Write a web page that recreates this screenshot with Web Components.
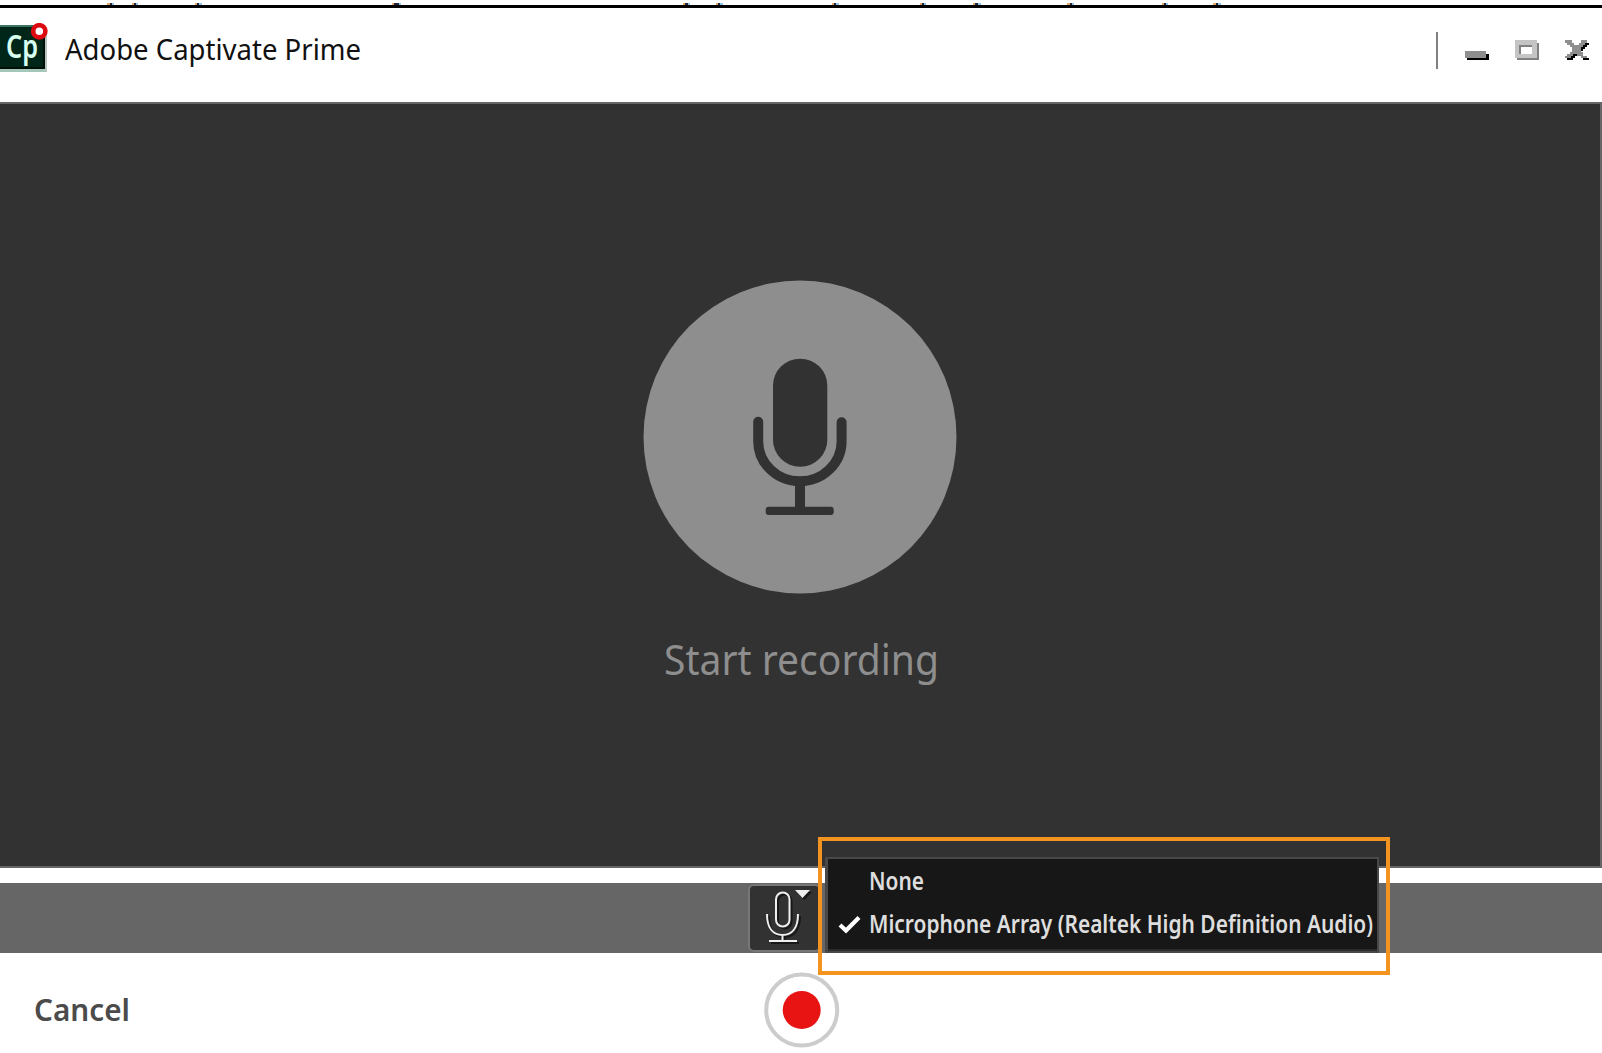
<!DOCTYPE html>
<html lang="en">
<head>
<meta charset="utf-8">
<title>Adobe Captivate Prime</title>
<style>
html,body{margin:0;height:100%;overflow:hidden;background:#fff}
body{font-family:"Noto Sans","Open Sans",sans-serif}
</style>
</head>
<body>
<recorder-window></recorder-window>
<script>
const define = (name, html, setup) => {
  const template = document.createElement('template');
  template.innerHTML = html;
  customElements.define(name, class extends HTMLElement {
    constructor() {
      super();
      this.attachShadow({mode: 'open'}).append(template.content.cloneNode(true));
    }
    connectedCallback() { if (setup) setup(this); }
  });
};

/* Label whose glyphs are squeezed horizontally to a given width */
define('fit-label', `
<style>
:host{display:block;flex:none;white-space:nowrap}
span{display:inline-block;transform-origin:0 50%;line-height:inherit}
</style><span><slot></slot></span>`, el => {
  const span = el.shadowRoot.querySelector('span');
  const target = Number(el.getAttribute('width'));
  el.style.width = target + 'px';
  const natural = span.getBoundingClientRect().width;
  if (natural) span.style.transform = 'scaleX(' + target / natural + ')';
});

define('backdrop-edge', `
<style>:host{display:block;height:5px;border-bottom:3px solid #000}svg{display:block}</style>
<svg width="1602" height="5" viewBox="0 0 1602 5" shape-rendering="crispEdges">
<g fill="#e3a868"><path d="M107 3h3v2h-3zM132 3h2v2h-2zM195 3h2v2h-2zM392 3h2v2h-2zM683 3h2v2h-2zM716 3h2v2h-2zM832 3h2v2h-2zM920 3h2v2h-2zM973 3h2v2h-2zM1067 3h3v2h-3zM1162 3h2v2h-2zM1213 3h3v2h-3z"/></g>
<g fill="#23283c"><path d="M110 3h2v2h-2zM134 3h2v2h-2zM197 3h2v2h-2zM394 3h5v2h-5zM685 3h3v2h-3zM718 3h2v2h-2zM834 3h2v2h-2zM922 3h2v2h-2zM975 3h3v2h-3zM1070 3h2v2h-2zM1164 3h2v2h-2zM1216 3h2v2h-2z"/></g>
<g fill="#8fc6ee"><path d="M112 3h2v2h-2zM136 3h2v2h-2zM199 3h3v2h-3zM399 3h2v2h-2zM688 3h2v2h-2zM720 3h3v2h-3zM836 3h3v2h-3zM924 3h2v2h-2zM978 3h3v2h-3zM1072 3h2v2h-2zM1166 3h2v2h-2zM1218 3h3v2h-3z"/></g>
</svg>`);

define('app-logo', `
<style>
:host{display:block;position:relative;width:48px;height:50px;margin-top:15px}
.tile{box-sizing:border-box;width:45px;height:44px;background:#00261a;border:2px solid #001009;border-top-color:#3f7361;border-left:0;box-shadow:0 3px #a5c7ba,2px 3px #b6c4be}
.gap{height:2px}
fit-label{font-size:32px;line-height:38px;color:#d9fff1;font-weight:600;padding-left:6px}
svg{position:absolute;left:31px;top:0}
</style>
<div class="gap"></div>
<div class="tile"><fit-label width="32">Cp</fit-label></div>
<svg width="17" height="17" viewBox="0 0 17 17"><circle cx="8.3" cy="8.3" r="6.1" fill="#fff" stroke="#dc0a10" stroke-width="4.6"/></svg>`);

define('window-controls', `
<style>:host{display:block}svg{display:block}</style>
<svg width="166" height="94" viewBox="1436 8 166 94" shape-rendering="crispEdges">
<path fill="#808080" d="M1436 32h2v37h-2z"/>
<path fill="#000" d="M1467 54h22v6h-22z"/><path fill="#8e8e8e" d="M1465 51h21v7h-21z"/>
<path fill="#808080" d="M1517 43h22v17h-22z"/><path fill="#c4c4c4" d="M1515 40h22v18h-22z"/>
<path fill="#808080" d="M1519 45h13v9h-13z"/><path fill="#fff" d="M1521 47h11v7h-11z"/>
<path fill="#000" d="M1585 43h4v2h-4zM1583 45h4v2h-4zM1581 47h4v2h-4zM1581 49h2v2h-2zM1573 54h4v2h-4zM1571 56h4v2h-4zM1567 58h6v2h-6zM1583 58h6v2h-6z"/>
<path fill="#8e8e8e" d="M1565 40h7v3h-7zM1581 40h6v3h-6zM1567 43h7v2h-7zM1579 43h6v2h-6zM1570 45h13v2h-13zM1572 47h9v5h-9zM1570 52h13v2h-13zM1567 54h6v2h-6zM1577 54h6v2h-6zM1565 56h6v2h-6zM1581 56h6v2h-6z"/>
</svg>`);

define('title-bar', `
<style>
:host{display:flex;height:94px;background:#fff;color:#111}
.name{font-size:29.5px;line-height:40px;padding:21px 0 0 16.5px;flex:1}
</style>
<app-logo></app-logo><div class="name"><fit-label width="296">Adobe Captivate Prime</fit-label></div><window-controls></window-controls>`);

define('record-stage', `
<style>
:host{box-sizing:border-box;display:flex;flex-direction:column;align-items:center;height:766px;background:#323232;border:solid #666;border-width:2px 2px 2px 0;padding-top:176px}
svg{display:block}
fit-label{font-size:41px;line-height:56px;color:#8e8e8e;font-weight:400;margin:37px 0 0 2px}
</style>
<svg width="314" height="314" viewBox="643.3 280.3 314 314">
<circle cx="800.3" cy="437.3" r="156.5" fill="#8e8e8e"/>
<rect x="773.3" y="359" width="54.3" height="108" rx="27" fill="#323232"/>
<g fill="none" stroke="#323232" stroke-linecap="round"><path stroke-width="10" d="M758.5 422v19.500a41.7 40 0 0 0 83.400 0V422.500"/><path stroke-width="10" stroke-linecap="butt" d="M800.3 484v25"/></g>
<rect x="766" y="507" width="68" height="8.300" rx="3" fill="#323232"/>
</svg>
<fit-label width="275">Start recording</fit-label>`);

define('mic-picker', `
<style>
:host{display:block;box-sizing:border-box;width:73px;height:68px;background:#323232;border:2px solid #777;border-radius:6px;margin:1px 0 0 748px}
svg{display:block}
</style>
<svg width="69" height="64" viewBox="750 886 69 64">
<g fill="none" stroke="#171717" stroke-width="2" transform="translate(2 2)"><rect x="776" y="892.5" width="13.500" height="34" rx="6.7"/><path d="M767 914c0 14 6 21 15.500 21s15.500-7 15.500-21M782.500 935v6M769 941h28"/><path fill="#171717" stroke="none" d="M795 890h15l-7.500 8z"/></g>
<g fill="none" stroke="#eee" stroke-width="2"><rect x="776" y="892.5" width="13.500" height="34" rx="6.7"/><path d="M767 914c0 14 6 21 15.500 21s15.500-7 15.500-21M782.500 935v6M769 941h28"/><path fill="#eee" stroke="none" d="M795 890h15l-7.500 8z"/></g>
</svg>`);

define('device-option', `
<style>
:host{display:flex;align-items:center;height:43px;font-size:24.5px;line-height:43px;font-weight:600;color:#dedede}
.mark{width:41px;height:24px;flex:none}
svg{display:none;width:24px;height:20px;margin:3px 0 0 10px}
:host([checked]) svg{display:block}
</style>
<div class="mark"><svg viewBox="0 0 24 20"><path d="M2 10l6 5.500L21 2.500" fill="none" stroke="#fff" stroke-width="4.200"/></svg></div><slot></slot>`);

define('device-menu', `
<style>
:host{display:block;box-sizing:border-box;position:absolute;left:818px;top:837px;width:572px;height:138px;border:4px solid #f39421;padding:16px 0 0 3px}
.list{box-sizing:border-box;width:554px;height:96px;background:#171717;border:2px solid #484848;border-left-width:3px;box-shadow:inset 0 -2px #2c2c2c}
</style>
<div class="list">
<device-option><fit-label width="55">None</fit-label></device-option>
<device-option checked><fit-label width="504">Microphone Array (Realtek High Definition Audio)</fit-label></device-option>
</div>`);

define('source-bar', `
<style>:host{display:flex;height:70px;margin-top:15px;background:#666}</style>
<mic-picker></mic-picker><device-menu></device-menu>`);

define('action-footer', `
<style>
:host{display:flex;height:100px;background:#fff;color:#4b4b4b}
.cancel{font-size:30px;line-height:40px;font-weight:600;padding:37px 0 0 33.5px;width:730.5px}
svg{display:block;margin-top:19px}
</style>
<div class="cancel"><fit-label width="96">Cancel</fit-label></div>
<svg width="76" height="76" viewBox="0 0 76 76"><circle cx="37.700" cy="38" r="35.500" fill="#fff" stroke="#ccc" stroke-width="4"/><circle cx="37.700" cy="38" r="19" fill="#e81313"/></svg>`);

define('recorder-window', `
<style>:host{display:block;position:relative;width:1602px;height:1053px;overflow:hidden;background:#fff}</style>
<backdrop-edge></backdrop-edge><title-bar></title-bar><record-stage></record-stage><source-bar></source-bar><action-footer></action-footer>`);
</script>
</body>
</html>
